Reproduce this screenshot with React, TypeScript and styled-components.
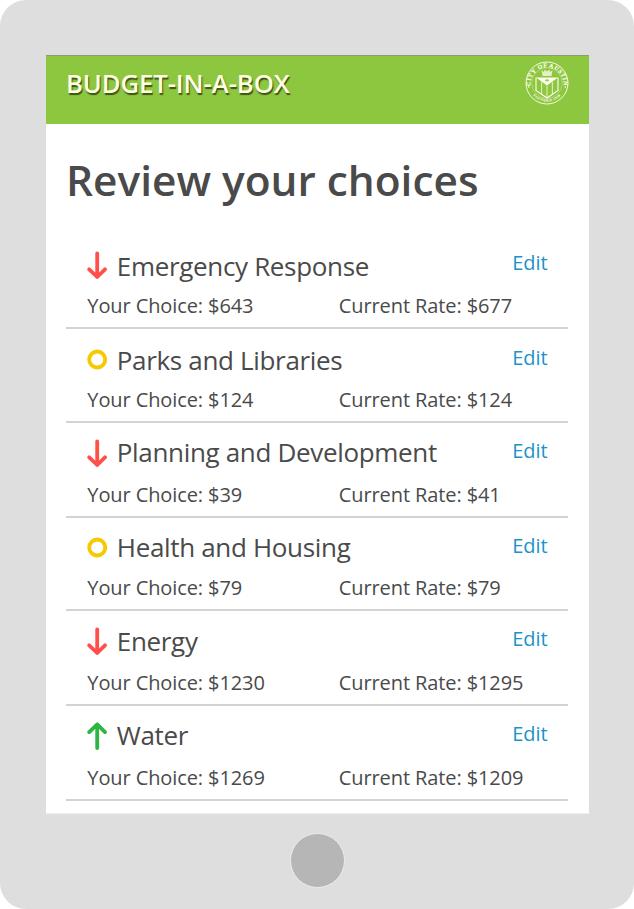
import React from "react";
import styled, { createGlobalStyle } from "styled-components";

const GlobalStyle = createGlobalStyle`
  * { box-sizing: border-box; }
  body { margin: 0; background: #fff; font-family: "Open Sans", "Noto Sans", sans-serif; color: #4a4a4a; }
`;

const Tablet = styled.div`
  display: flex;
  flex-direction: column;
  align-items: center;
  width: 634px;
  height: 909px;
  padding-top: 55px;
  background: #dedede;
  border-radius: 26px;
`;

const Screen = styled.div`
  width: 543px;
  height: 759px;
  margin-left: 1px;
  background: #fff;
  border-bottom: 1px solid #efefef;
  overflow: hidden;
`;

const Header = styled.header`
  display: flex;
  justify-content: space-between;
  height: 69px;
  padding: 0 20px 0 20px;
  background: #8dc63f;
  border-top: 1px solid #8c9a7c;
`;

const Brand = styled.div`
  margin-top: 10px;
  font-size: 25.6px;
  line-height: 36px;
  font-weight: 600;
  letter-spacing: -0.05px;
  white-space: nowrap;
  color: #ffffe0;
  text-shadow: 1px 1.5px 1px rgba(30, 45, 10, 0.75);
`;

const Seal = styled.svg`
  display: block;
  width: 44px;
  height: 44px;
  margin-top: 5px;
`;

const Heading = styled.h1`
  margin: 0;
  padding: 27px 0 0 20px;
  height: 110px;
  font-size: 42.4px;
  line-height: 58px;
  font-weight: 600;
  white-space: nowrap;
`;

const List = styled.ul`
  width: 502px;
  margin: 0 0 0 20px;
  padding: 0;
  list-style: none;
`;

const Item = styled.li<{ $height: number }>`
  display: flex;
  flex-direction: column;
  justify-content: space-between;
  height: ${(p) => p.$height}px;
  padding: 0 20.3px 7px 21.3px;
  border-bottom: 2px solid #d3d3d3;
`;

const Top = styled.div<{ $icon: number; $title: number; $edit: number }>`
  display: grid;
  grid-template-columns: 29.5px 1fr auto;
  align-items: start;
  & > svg { margin-top: ${(p) => p.$icon}px; margin-left: -0.3px; }
  & > h2 { margin-top: ${(p) => p.$title}px; }
  & > a { margin-top: ${(p) => p.$edit}px; }
`;

const Name = styled.h2`
  margin: 0;
  font-size: 26px;
  line-height: 36px;
  font-weight: 400;
  letter-spacing: -0.33px;
  white-space: nowrap;
`;

const Edit = styled.a`
  font-size: 20px;
  line-height: 28px;
  color: #1d93c9;
  text-decoration: none;
`;

const Amounts = styled.div`
  display: grid;
  grid-template-columns: 251.5px 1fr;
  font-size: 20px;
  line-height: 28px;
  letter-spacing: -0.1px;
  white-space: nowrap;
`;

const Mark = styled.svg`
  display: block;
  width: 20px;
  height: 28px;
`;

const Footer = styled.div`
  display: flex;
  padding-top: 19px;
`;

const HomeButton = styled.div`
  width: 55px;
  height: 55px;
  border-radius: 50%;
  background: #b6b6b6;
  border: 1px solid #ececec;
`;

type Trend = "down" | "same" | "up";

const TrendIcon = ({ trend }: { trend: Trend }) => {
  if (trend === "same")
    return (
      <Mark viewBox="0 0 20 28">
        <circle cx="10.2" cy="13.5" r="8" fill="none" stroke="#f8c900" strokeWidth="3.8" />
      </Mark>
    );
  return (
    <Mark viewBox="0 0 20 28" fill="none" strokeWidth="3.8" strokeLinecap="round" strokeLinejoin="round">
      {trend === "down" ? (
        <path d="M10.2 2.3V26M2.2 18.3L10.2 26L18 18.3" stroke="#ff4f48" />
      ) : (
        <path d="M10.2 26V2.4M2.2 10.1L10.2 2.4L18 10.1" stroke="#2db742" />
      )}
    </Mark>
  );
};

const CitySeal = () => (
  <Seal viewBox="0 0 44 44" fill="none" stroke="#fffff0">
    <defs>
      <path id="sealTop" d="M6.3 28.5A16.6 16.6 0 1 1 37.7 28.5" />
      <path id="sealBottom" d="M8 34.5A18.9 18.9 0 0 0 36 34.5" />
    </defs>
    <circle cx="22" cy="22" r="21" strokeWidth="0.9" />
    <circle cx="22" cy="22" r="15.3" strokeWidth="0.5" opacity="0.6" />
    <g fill="#fffff0" stroke="none" fontFamily="Liberation Serif, serif" fontWeight="700" textAnchor="middle">
      <text fontSize="6" letterSpacing="0.5" stroke="#fffff0" strokeWidth="0.15">
        <textPath href="#sealTop" startOffset="50%">CITY OF AUSTIN</textPath>
      </text>
      <text fontSize="3.8" letterSpacing="0.3">
        <textPath href="#sealBottom" startOffset="50%">FOUNDED 1839</textPath>
      </text>
      <circle cx="3.7" cy="26" r="0.8" />
      <circle cx="40.3" cy="26" r="0.8" />
      <path d="M11 16.5H33L22 24.5Z" />
      <path d="M16.5 9l2.2 2 1.2-2.5 2.1 2 2.1-2 1.2 2.5 2.2-2-1 6H17.5Z" opacity="0.75" />
    </g>
    <path d="M20 19.3h4M22 17.8v3" stroke="#8dc63f" strokeWidth="1" />
    <path d="M11 16.5V29.5L22 37L33 29.5V16.5" strokeWidth="1.1" />
    <path d="M16.6 21V33M22 24.5V36.5M27.4 21V33" strokeWidth="1.1" opacity="0.7" />
  </Seal>
);

interface Row {
  name: string;
  trend: Trend;
  choice: number;
  rate: number;
  height: number;
  icon: number;
  title: number;
  edit: number;
}

const rows: Row[] = [
  { name: "Emergency Response", trend: "down", choice: 643, rate: 677, height: 95.4, icon: 17, title: 14, edit: 15 },
  { name: "Parks and Libraries", trend: "same", choice: 124, rate: 124, height: 93.6, icon: 16.6, title: 13, edit: 14.6 },
  { name: "Planning and Development", trend: "down", choice: 39, rate: 41, height: 95, icon: 16, title: 11, edit: 14 },
  { name: "Health and Housing", trend: "same", choice: 79, rate: 79, height: 93, icon: 16, title: 11, edit: 14 },
  { name: "Energy", trend: "down", choice: 1230, rate: 1295, height: 95, icon: 16, title: 12, edit: 14 },
  { name: "Water", trend: "up", choice: 1269, rate: 1209, height: 95, icon: 16, title: 11, edit: 14 },
];

export default function App() {
  return (
    <>
      <GlobalStyle />
      <Tablet>
        <Screen>
          <Header>
            <Brand>BUDGET-IN-A-BOX</Brand>
            <CitySeal />
          </Header>
          <Heading>Review your choices</Heading>
          <List>
            {rows.map((r) => (
              <Item key={r.name} $height={r.height}>
                <Top $icon={r.icon} $title={r.title} $edit={r.edit}>
                  <TrendIcon trend={r.trend} />
                  <Name>{r.name}</Name>
                  <Edit>Edit</Edit>
                </Top>
                <Amounts>
                  <span>Your Choice: ${r.choice}</span>
                  <span>Current Rate: ${r.rate}</span>
                </Amounts>
              </Item>
            ))}
          </List>
        </Screen>
        <Footer>
          <HomeButton />
        </Footer>
      </Tablet>
    </>
  );
}
